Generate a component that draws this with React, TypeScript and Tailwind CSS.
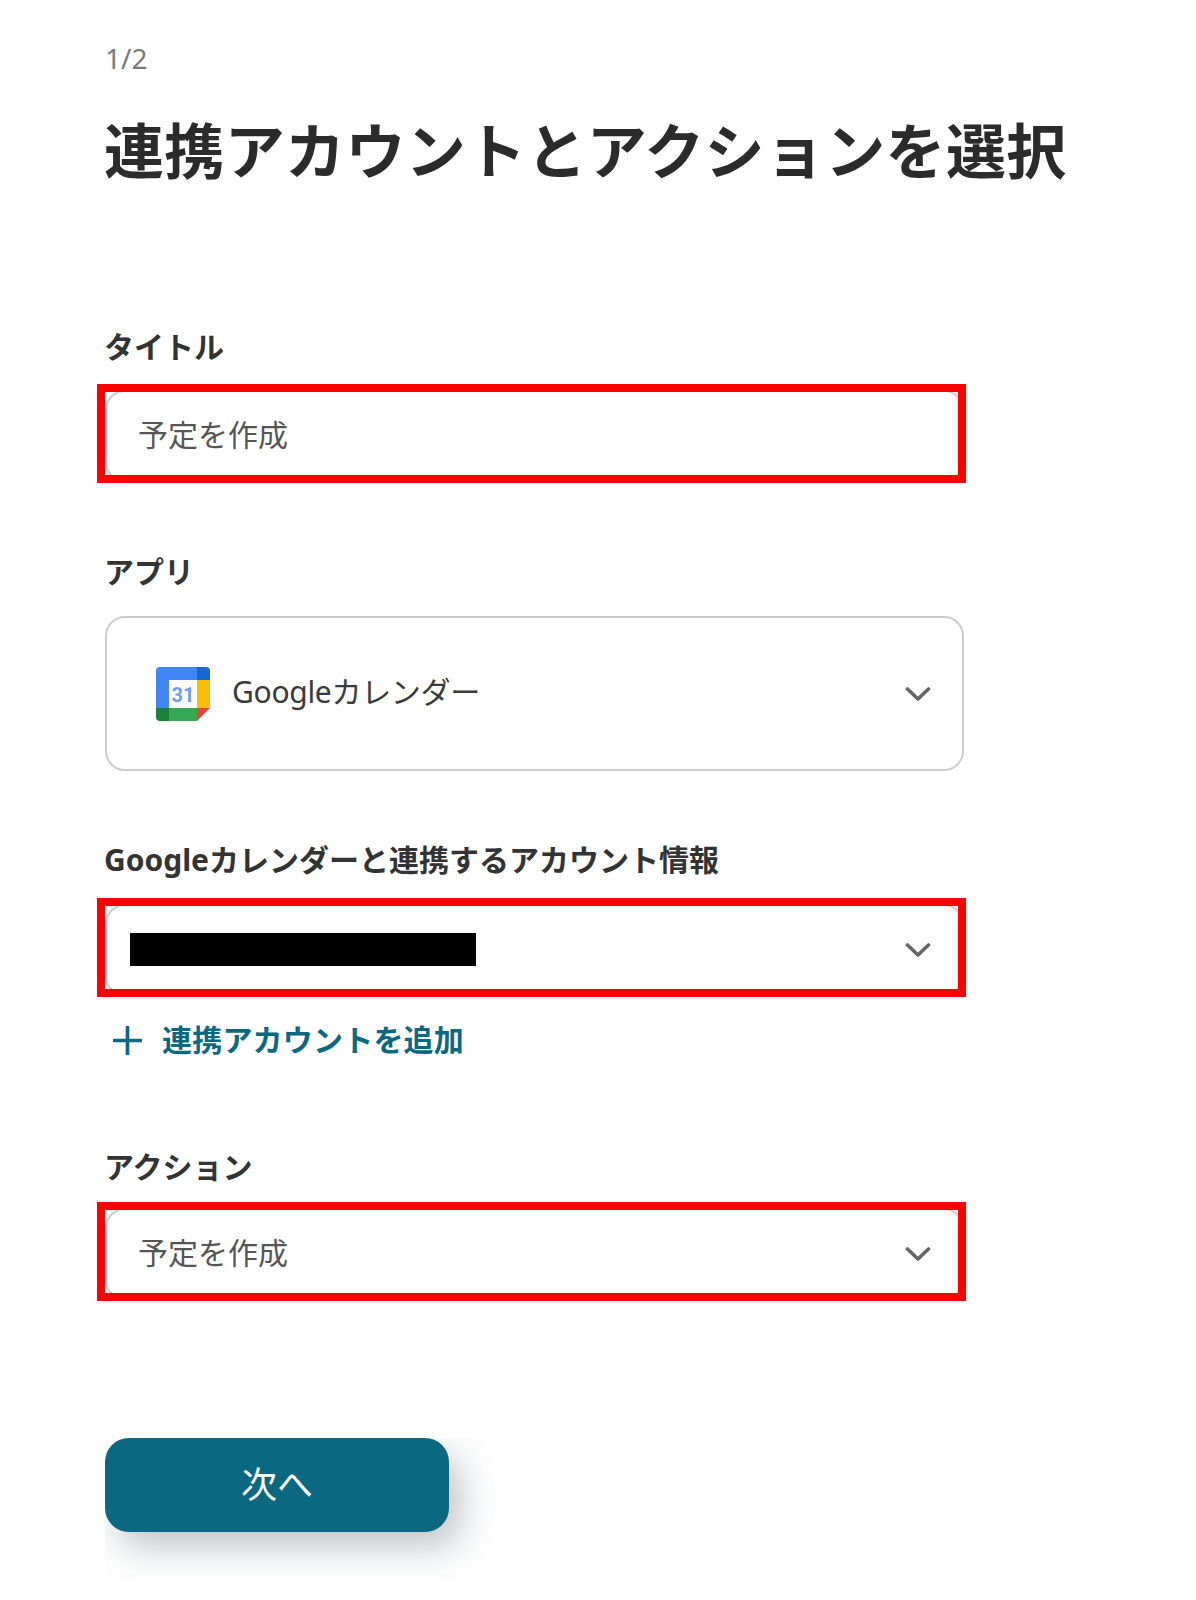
const font = { fontFamily: '"Noto Sans", "Noto Sans CJK JP", sans-serif' };

function Chevron() {
  return (
    <svg width="26" height="16" viewBox="0 0 26 16" fill="none" className="shrink-0">
      <path d="M2.5 3 L13 13 L23.5 3" stroke="#666666" strokeWidth="3.6" strokeLinecap="round" strokeLinejoin="round" />
    </svg>
  );
}

function CalendarIcon() {
  return (
    <svg width="54" height="54" viewBox="0 0 54 54" className="shrink-0">
      <path d="M4 0 H41 V13 H13 V41 H0 V4 A4 4 0 0 1 4 0 Z" fill="#4285f4" />
      <path d="M41 0 H50 A4 4 0 0 1 54 4 V13 H41 Z" fill="#1967d2" />
      <rect x="13" y="13" width="28" height="28" fill="#ffffff" />
      <rect x="41" y="13" width="13" height="28" fill="#fbbc04" />
      <path d="M13 41 H41 V54 H13 Z" fill="#34a853" />
      <path d="M0 41 H13 V54 H4 A4 4 0 0 1 0 50 Z" fill="#188038" />
      <path d="M41 41 H54 L41 54 Z" fill="#ea4335" />
      <text x="27" y="35" textAnchor="middle" fontFamily="Roboto, sans-serif" fontWeight="700" fontSize="20" fill="#6d9cf5">31</text>
    </svg>
  );
}

function RedBox() {
  return <div className="absolute -left-[10px] -right-[4px] -top-[8px] -bottom-[3px] border-[8px] border-[#ff0000]" />;
}

function Label({ children }: { children: React.ReactNode }) {
  return <div className="-ml-px text-[30px] leading-[40px] font-bold text-[#333333]">{children}</div>;
}

export default function App() {
  return (
    <div className="w-[1196px] h-[1600px] bg-white pl-[105px] overflow-hidden" style={font}>
      <div className="pt-[38px] text-[28px] leading-[40px] text-[#7a7a7a]">1/2</div>
      <h1 className="-ml-px mt-[33px] text-[60px] leading-[80px] tracking-[0.35px] font-bold text-[#2b2b2b] whitespace-nowrap">連携アカウントとアクションを選択</h1>

      <div className="mt-[136px]"><Label>タイトル</Label></div>
      <div className="relative mt-[23px] w-[859px] h-[92px] rounded-[20px] border-2 border-[#cccccc] flex items-center pl-[31px] text-[30px] text-[#555555]">
        <span className="mb-[4px]">予定を作成</span>
        <RedBox />
      </div>

      <div className="mt-[70px]"><Label>アプリ</Label></div>
      <div className="mt-[24px] w-[859px] h-[155px] rounded-[20px] border-2 border-[#cccccc] flex items-center pl-[49px] pr-[31px]">
        <CalendarIcon />
        <span className="ml-[22px] mb-[4px] text-[30px] text-[#3a3a3a] tracking-[-0.3px]">Googleカレンダー</span>
        <span className="ml-auto"><Chevron /></span>
      </div>

      <div className="mt-[69px]"><Label>Googleカレンダーと連携するアカウント情報</Label></div>
      <div className="relative mt-[24px] w-[859px] h-[92px] rounded-[20px] border-2 border-[#cccccc] flex items-center pl-[23px] pr-[31px]">
        <div className="w-[346px] h-[33px] bg-black mb-[2px]" />
        <span className="ml-auto"><Chevron /></span>
        <RedBox />
      </div>

      <div className="mt-[24px] flex items-center pl-[8px] h-[40px] text-[#0a6880]">
        <svg width="29" height="29" viewBox="0 0 29 29" className="shrink-0">
          <path d="M14.5 1 V28 M1 14.5 H28" stroke="#0a6880" strokeWidth="3.6" strokeLinecap="round" />
        </svg>
        <span className="ml-[20px] mb-[2px] text-[30px] font-semibold tracking-[0.2px]">連携アカウントを追加</span>
      </div>

      <div className="mt-[87px]"><Label>アクション</Label></div>
      <div className="relative mt-[21px] w-[859px] h-[92px] rounded-[20px] border-2 border-[#cccccc] flex items-center pl-[31px] pr-[31px] text-[30px] text-[#555555]">
        <span className="mb-[4px]">予定を作成</span>
        <span className="ml-auto"><Chevron /></span>
        <RedBox />
      </div>

      <div className="mt-[138px] w-[400px] h-[149px] overflow-hidden">
        <button className="w-[344px] h-[94px] rounded-[24px] bg-[#0a6880] text-white text-[36px] shadow-[12px_16px_36px_rgba(50,65,80,0.3)]">
          次へ
        </button>
      </div>
    </div>
  );
}
